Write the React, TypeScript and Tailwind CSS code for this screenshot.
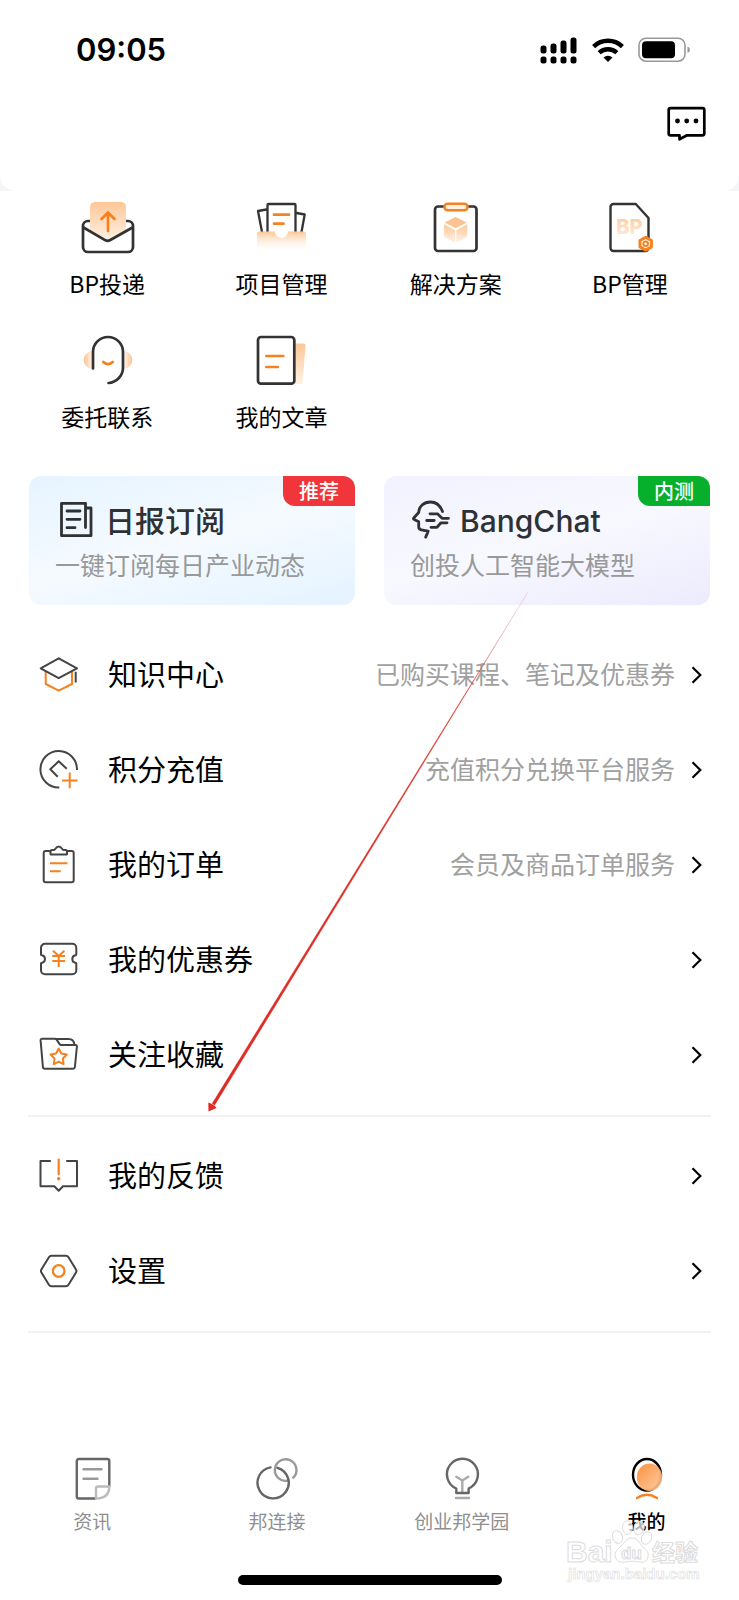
import type { ReactNode } from 'react';

interface LinkItem {
    label: string;
    href: string;
    icon: ReactNode;
    hint?: string;
}

const DARK = '#333';
const ORANGE = '#f5811f';

function ToolIcon({ children }: { children: ReactNode }) {
    return (
        <svg
            viewBox="0 0 60 60"
            className="size-15"
            fill="none"
            stroke={DARK}
            strokeWidth="2.7"
            strokeLinecap="round"
            strokeLinejoin="round"
            aria-hidden="true"
        >
            {children}
        </svg>
    );
}

function RowIcon({ children }: { children: ReactNode }) {
    return (
        <svg
            viewBox="0 0 40 40"
            className="size-10 shrink-0"
            fill="none"
            stroke="#444"
            strokeWidth="2"
            strokeLinejoin="round"
            aria-hidden="true"
        >
            {children}
        </svg>
    );
}

function TabIcon({ children }: { children: ReactNode }) {
    return (
        <svg
            viewBox="0 0 44 44"
            className="size-11"
            fill="none"
            stroke="#666"
            strokeWidth="2.4"
            strokeLinecap="round"
            strokeLinejoin="round"
            aria-hidden="true"
        >
            {children}
        </svg>
    );
}

// Shared gradients, referenced by id from the icons below
function Gradients() {
    return (
        <svg className="absolute size-0" aria-hidden="true">
            <defs>
                <linearGradient id="fadeDown" x1="0" y1="0" x2="0" y2="1">
                    <stop offset="0" stopColor="#fdc796" />
                    <stop offset="1" stopColor="#fff1e4" />
                </linearGradient>
                <linearGradient id="fadeOut" x1="0" y1="0" x2="0" y2="1">
                    <stop offset="0" stopColor="#fdc796" />
                    <stop offset="1" stopColor="#fff" stopOpacity="0" />
                </linearGradient>
                <linearGradient id="earLeft" x1="0" y1="0" x2="1" y2="0">
                    <stop offset="0" stopColor="#fcc28f" />
                    <stop offset="1" stopColor="#fff1e4" />
                </linearGradient>
                <linearGradient id="earRight" x1="1" y1="0" x2="0" y2="0">
                    <stop offset="0" stopColor="#fcc28f" />
                    <stop offset="1" stopColor="#fff1e4" />
                </linearGradient>
                <linearGradient id="face" x1="0" y1="0" x2="1" y2="1">
                    <stop offset="0" stopColor="#fb8a30" />
                    <stop offset="1" stopColor="#fcc79c" />
                </linearGradient>
                <linearGradient id="pointer" gradientUnits="userSpaceOnUse" x1="528" y1="592" x2="209" y2="1111">
                    <stop offset="0" stopColor="#d9a0b8" stopOpacity="0.6" />
                    <stop offset="0.2" stopColor="#d9342b" />
                    <stop offset="1" stopColor="#e02a22" />
                </linearGradient>
            </defs>
        </svg>
    );
}

const tools: LinkItem[] = [
    {
        label: 'BP投递',
        href: '#deliver',
        icon: (
            <ToolIcon>
                <path d="M13 21h-2a5 5 0 0 0-5 5v21a5 5 0 0 0 5 5h40a5 5 0 0 0 5-5V26a5 5 0 0 0-5-5h-2" />
                <path
                    d="M13 31V7a5 5 0 0 1 5-5h26a5 5 0 0 1 5 5v24L31 41z"
                    fill="url(#fadeDown)"
                    stroke="none"
                />
                <path d="M6.500 27.500 28.500 40.300q2.200 1.200 4.400 0L55.500 27.500" />
                <path d="M31 31V12.500M24.500 19 31 12.500 37.500 19" stroke={ORANGE} />
            </ToolIcon>
        ),
    },
    {
        label: '项目管理',
        href: '#projects',
        icon: (
            <ToolIcon>
                <path d="M15.500 9.500 7 11l4 21M45.500 13l8.200 1.500L50.500 32" strokeWidth="2.300" />
                <path d="M16.500 32V5a1 1 0 0 1 1-1h26a1 1 0 0 1 1 1v27" strokeWidth="2.300" />
                <path d="M23 14.700h15M23 23.700h9.500" stroke={ORANGE} />
                <path
                    d="M8.500 31.500H24a6.500 6.500 0 0 0 13 0h15.500a2.500 2.500 0 0 1 2.500 2.500v19H6V34a2.500 2.500 0 0 1 2.500-2.500z"
                    fill="url(#fadeOut)"
                    stroke="none"
                />
            </ToolIcon>
        ),
    },
    {
        label: '解决方案',
        href: '#solutions',
        icon: (
            <ToolIcon>
                <rect x="9" y="6.500" width="41.500" height="44.500" rx="3" />
                <rect x="18.500" y="3.800" width="23" height="6.500" rx="3" fill="#fff1e4" stroke={ORANGE} strokeWidth="2.500" />
                <g stroke="none" fill="url(#fadeDown)">
                    <path d="m29.700 17 11 5.500-11 5.700-11-5.700z" fill="#fcc28f" />
                    <path d="m18 24.200 11 5.800v12.500l-9.500-5a3 3 0 0 1-1.500-2.600z" />
                    <path d="m41.400 24.200-11 5.800v12.500l9.500-5a3 3 0 0 0 1.500-2.600z" />
                </g>
            </ToolIcon>
        ),
    },
    {
        label: 'BP管理',
        href: '#bp',
        icon: (
            <ToolIcon>
                <path d="M13.500 4h22.300l12.700 14v30a3 3 0 0 1-3 3h-32a3 3 0 0 1-3-3V7a3 3 0 0 1 3-3z" strokeWidth="2.400" />
                <text
                    x="29.500"
                    y="34"
                    textAnchor="middle"
                    fontFamily="Inter, sans-serif"
                    fontSize="20"
                    fontWeight="800"
                    fill="url(#fadeDown)"
                    stroke="none"
                >
                    BP
                </text>
                <path d="m45.700 37.300 5.700 3.200v6.400l-5.700 3.200-5.700-3.200v-6.400z" fill="#fff" stroke={ORANGE} strokeWidth="3" />
                <circle cx="45.700" cy="43.700" r="2.300" fill="#fff" stroke={ORANGE} strokeWidth="2" />
            </ToolIcon>
        ),
    },
    {
        label: '委托联系',
        href: '#contact',
        icon: (
            <ToolIcon>
                <path d="M14.500 18v18a9.100 9.100 0 0 1 0-18z" fill="url(#earLeft)" stroke="none" />
                <path d="M47.500 18v18a9.100 9.100 0 0 0 0-18z" fill="url(#earRight)" stroke="none" />
                <path d="M16 35.500V19a15 15 0 0 1 30 0v16a15.500 15.500 0 0 1-14.500 15" />
                <path d="M26.300 29q4.700 4.400 9.400 0" stroke={ORANGE} />
            </ToolIcon>
        ),
    },
    {
        label: '我的文章',
        href: '#articles',
        icon: (
            <ToolIcon>
                <path d="M44 10.500h8.500a2 2 0 0 1 2 2.200L51.500 51H44z" fill="url(#fadeDown)" stroke="none" />
                <rect x="7" y="4" width="36.300" height="46.700" rx="3" />
                <path d="M15.300 23h17M15.300 34h11.500" stroke={ORANGE} />
            </ToolIcon>
        ),
    },
];

const serviceItems: LinkItem[] = [
    {
        label: '知识中心',
        href: '#knowledge',
        hint: '已购买课程、笔记及优惠券',
        icon: (
            <RowIcon>
                <path d="M6.700 16.500V29l13 6.700L33 29V16.500" stroke={ORANGE} />
                <path d="M19.700 3.300 38 13.300l-18.300 9.900-18-9.900zM36.700 16.700v10.800" />
            </RowIcon>
        ),
    },
    {
        label: '积分充值',
        href: '#points',
        hint: '充值积分兑换平台服务',
        icon: (
            <RowIcon>
                <path d="M38 20a18.300 18.300 0 1 0-17.700 17.600" />
                <path d="m27.700 18.700-8-7.400-8.400 8 7.400 7.400" />
                <path d="M30.700 22.600v15.600M23 30.400h15.500" stroke={ORANGE} />
            </RowIcon>
        ),
    },
    {
        label: '我的订单',
        href: '#orders',
        hint: '会员及商品订单服务',
        icon: (
            <RowIcon>
                <path d="M12 6H6.700a2 2 0 0 0-2 2v27.300a2 2 0 0 0 2 2h26a2 2 0 0 0 2-2V8a2 2 0 0 0-2-2h-5.200" />
                <path d="M11.500 9V6.500q0-1.500 1.500-1.500h2c1.500 0 1.500-3.500 4.700-3.500S23 5 24.500 5h2Q28 5 28 6.500V9q0 .5-.5.500H12q-.5 0-.5-.5z" />
                <path d="M11 18.200h17.500M11 26.300h10.800" stroke={ORANGE} />
            </RowIcon>
        ),
    },
    {
        label: '我的优惠券',
        href: '#coupons',
        icon: (
            <RowIcon>
                <path d="M6 3.800h27.300a4 4 0 0 1 4 4v6.700q0 .8-.8.800a3.800 3.800 0 0 0 0 7.500q.8 0 .8.800v6.700a4 4 0 0 1-4 4H6a4 4 0 0 1-4-4v-6.700q0-.8.800-.8a3.800 3.800 0 0 0 0-7.500q-.8 0-.8-.8V7.800a4 4 0 0 1 4-4z" />
                <path d="m14 10.700 5.700 5.300 5.700-5.300M13.300 16h12.800M13.300 21h12.800M19.700 16v11" stroke={ORANGE} />
            </RowIcon>
        ),
    },
    {
        label: '关注收藏',
        href: '#favorites',
        icon: (
            <RowIcon>
                <path d="M3.300 3.700H16q1 0 1.600.9l3 4.500q.6.900 1.600.9h14.200q1.700 0 1.500 1.700l-2 20.300q-.2 1.700-1.800 1.700H5.800Q4 33.700 3.900 32L1.600 5.400q-.1-1.700 1.700-1.700z" />
                <path d="M17 3.900h12.500q5.500 0 6 6" />
                <path d="m19.700 13.500 2.600 5 5.500 1-3.900 4 .7 5.600-4.900-2.500-4.900 2.500.7-5.600-3.900-4 5.500-1z" stroke={ORANGE} />
            </RowIcon>
        ),
    },
];

const supportItems: LinkItem[] = [
    {
        label: '我的反馈',
        href: '#feedback',
        icon: (
            <RowIcon>
                <path d="M11.800 5H1.500v25.300h13.800l4.400 4.400 4.300-4.400h14V5H27.200" />
                <path d="M19.700 3.500v14.800" stroke={ORANGE} strokeWidth="2.200" strokeLinecap="round" />
                <circle cx="19.700" cy="22.700" r="1.800" fill={ORANGE} stroke="none" />
            </RowIcon>
        ),
    },
    {
        label: '设置',
        href: '#settings',
        icon: (
            <RowIcon>
                <path d="M12.500 4.700h14.400q1.700 0 2.600 1.500l7.500 12.300q.9 1.500 0 3l-7.500 12.300q-.9 1.500-2.600 1.500H12.500q-1.700 0-2.600-1.500L2.400 21.500q-.9-1.500 0-3L9.900 6.200q.9-1.500 2.600-1.500z" />
                <circle cx="19.700" cy="20" r="5.800" stroke={ORANGE} strokeWidth="2.300" />
            </RowIcon>
        ),
    },
];

const tabs: LinkItem[] = [
    {
        label: '资讯',
        href: '#news',
        icon: (
            <TabIcon>
                <path d="M25 42.500H8.800a2 2 0 0 1-2-2V5a2 2 0 0 1 2-2h28.500a2 2 0 0 1 2 2v25" />
                <path d="M39.300 30.500H28a2 2 0 0 0-2 2v10q13.300 0 13.300-12z" stroke="#bbb" />
                <path d="M13.500 13.300h18M13.500 22.700h14" stroke="#999" />
            </TabIcon>
        ),
    },
    {
        label: '邦连接',
        href: '#connect',
        icon: (
            <TabIcon>
                <path d="M38.300 21.700A10.800 10.800 0 1 0 33.500 24.500" stroke="#999" />
                <path d="M15.500 11.400a15.600 15.600 0 1 0 7 .4" />
            </TabIcon>
        ),
    },
    {
        label: '创业邦学园',
        href: '#academy',
        icon: (
            <TabIcon>
                <path d="m16.300 20.700 6 3.800 6-3.800M22.300 24.500v12.300M16 42h13" stroke="#aaa" />
                <path d="M16.300 37v-4.500A15.500 15.500 0 1 1 29 32.300q-.4.300-.4 1V37z" />
            </TabIcon>
        ),
    },
    {
        label: '我的',
        href: '#me',
        icon: (
            <TabIcon>
                <ellipse cx="22" cy="18.800" rx="14" ry="15.800" stroke="#000" />
                <ellipse cx="24.500" cy="21.300" rx="12.700" ry="13.700" fill="url(#face)" fillOpacity="0.92" stroke="none" />
                <path d="M12 42q10-6.500 20 0" stroke={ORANGE} />
            </TabIcon>
        ),
    },
];

function StatusBar() {
    return (
        <div className="flex items-center justify-between pt-7 pr-12 pl-19">
            <time className="font-['Inter',sans-serif] text-[31px] leading-11 font-semibold">09:05</time>
            <div className="flex items-center gap-3.5">
                <svg viewBox="0 0 38 28" className="h-7 w-[38px]" aria-hidden="true">
                    <rect x="0.500" y="9.500" width="6" height="8" rx="2.500" />
                    <rect x="10.500" y="7.500" width="6" height="10" rx="2.500" />
                    <rect x="20.500" y="4.500" width="6" height="13" rx="2.500" />
                    <rect x="30.500" y="1.500" width="6" height="16" rx="2.500" />
                    <rect x="0.500" y="20.500" width="6" height="7" rx="2.500" />
                    <rect x="10.500" y="20.500" width="6" height="7" rx="2.500" />
                    <rect x="20.500" y="20.500" width="6" height="7" rx="2.500" />
                    <rect x="30.500" y="20.500" width="6" height="7" rx="2.500" />
                </svg>
                <svg viewBox="0 0 32 26" className="h-[26px] w-8" fill="none" stroke="#000" strokeWidth="4.400" aria-hidden="true">
                    <path d="M1.600 9.600a20.600 20.600 0 0 1 28.800 0" />
                    <path d="M7.200 15.800a12.600 12.600 0 0 1 17.600 0" />
                    <path d="M11.500 20.500a6.500 6.500 0 0 1 9 0L16 25z" fill="#000" stroke="none" />
                </svg>
                <svg viewBox="0 0 53 26" className="h-[26px] w-[53px]" aria-hidden="true">
                    <rect x="1" y="1.200" width="46" height="23" rx="7" fill="none" stroke="#999" strokeWidth="1.600" />
                    <rect x="4" y="4.200" width="33" height="17" rx="4" />
                    <path d="M49.500 9.500q2.500.8 2.500 3.200t-2.500 3.200z" fill="#999" />
                </svg>
            </div>
        </div>
    );
}

interface PromoCardProps {
    title: string;
    subtitle: string;
    badge: string;
    href: string;
    icon: ReactNode;
    cardClass: string;
    badgeClass: string;
}

function PromoCard({ title, subtitle, badge, href, icon, cardClass, badgeClass }: PromoCardProps) {
    return (
        <a href={href} className={`relative flex flex-1 flex-col gap-2 rounded-xl pt-6 pb-[25px] pl-[26px] ${cardClass}`}>
            <span
                className={`absolute top-0 right-0 flex h-[30px] w-[72px] items-center justify-center rounded-tr-xl rounded-bl-xl text-xl font-medium text-white ${badgeClass}`}
            >
                {badge}
            </span>
            <div className="flex items-center gap-2.5 text-[#2f3133]">
                {icon}
                <h2 className="pt-0.5 font-['Inter','Noto_Sans_CJK_SC',sans-serif] text-3xl leading-[38px] font-medium">{title}</h2>
            </div>
            <p className="text-[25px] leading-8 whitespace-nowrap text-[#999]">{subtitle}</p>
        </a>
    );
}

function MenuRow({ item }: { item: LinkItem }) {
    return (
        <li>
            <a href={item.href} className="flex h-[95px] items-center pr-[37px] pl-[39px]">
                {item.icon}
                <span className="ml-[29px] pb-1 text-[29px] leading-10">{item.label}</span>
                <span className="ml-auto pb-1 text-[25px] leading-10 text-[#a0a0a0]">{item.hint}</span>
                <svg viewBox="0 0 11 18" className="ml-4 h-[18px] w-[11px]" fill="none" stroke="#000" strokeWidth="2.200" aria-hidden="true">
                    <path d="M1.500 1.300 9.300 9l-7.800 7.700" />
                </svg>
            </a>
        </li>
    );
}

function Watermark() {
    return (
        <svg
            viewBox="0 0 136 66"
            className="pointer-events-none absolute right-[39px] bottom-4 h-[66px] w-[136px]"
            fill="#fff"
            stroke="#dcdcdc"
            strokeWidth="1"
            fontFamily="'Liberation Sans', 'Noto Sans CJK SC', sans-serif"
            fontWeight="700"
        >
            <g fillOpacity="0.7">
                <ellipse cx="53.500" cy="19" rx="5" ry="6.500" transform="rotate(-20 53.500 19)" />
                <ellipse cx="63.500" cy="9.500" rx="5" ry="6.800" />
                <ellipse cx="75" cy="10" rx="5" ry="6.800" transform="rotate(12 75 10)" />
                <ellipse cx="82.500" cy="20" rx="5" ry="6.500" transform="rotate(25 82.500 20)" />
                <path d="M68 20c6 0 7 5 11 9 4 3 6 6 5 10-1 5-5 6-9 5-5-1-9-1-14 0-5 1-9-1-10-6 0-5 2-6 6-10 4-3 5-8 11-8z" />
            </g>
            <text x="2" y="44" fontSize="30">Bai</text>
            <text x="57" y="41" fontSize="17">du</text>
            <text x="88" y="43" fontSize="23">经验</text>
            <text x="4" y="61" fontSize="15" strokeWidth="0.600">jingyan.baidu.com</text>
        </svg>
    );
}

export default function App() {
    return (
        <div className="relative flex min-h-screen flex-col overflow-hidden bg-white font-['Noto_Sans_CJK_SC',sans-serif] text-black">
            <Gradients />

            {/* Header */}
            <div className="bg-[#f5f6f8]">
                <header className="h-[191px] rounded-b-2xl bg-white">
                    <StatusBar />
                    <div className="flex justify-end pt-[33px] pr-[31px]">
                        <button type="button" aria-label="消息">
                            <svg viewBox="0 0 42 36" className="h-9 w-[42px]" fill="none" stroke="#000" strokeWidth="2.700" strokeLinejoin="round" aria-hidden="true">
                                <path d="M4.500 3.200h32q1.800 0 1.800 1.800v23.500q0 1.800-1.800 1.800H21l-7.500 4v-4h-9q-1.800 0-1.800-1.800V5q0-1.800 1.800-1.800z" />
                                <g fill="#000" stroke="none">
                                    <circle cx="11.500" cy="16" r="2.400" />
                                    <circle cx="20.700" cy="16" r="2.400" />
                                    <circle cx="30" cy="16" r="2.400" />
                                </g>
                            </svg>
                        </button>
                    </div>
                </header>
            </div>

            <main>
                {/* Tools */}
                <div className="grid grid-cols-4 gap-y-[34px] pt-[9px] pr-[22px] pl-5">
                    {tools.map((tool) => (
                        <a key={tool.href} href={tool.href} className="flex flex-col items-center gap-[7px]">
                            {tool.icon}
                            <span className="text-[23px] leading-8">{tool.label}</span>
                        </a>
                    ))}
                </div>

                {/* Promo cards */}
                <div className="mt-11 flex gap-[29px] px-[29px]">
                    <PromoCard
                        title="日报订阅"
                        subtitle="一键订阅每日产业动态"
                        badge="推荐"
                        href="#daily"
                        cardClass="bg-linear-165 from-[#e6f4ff] via-[#f5faff] to-[#e4f3ff]"
                        badgeClass="bg-[#f0353b]"
                        icon={
                            <svg viewBox="-3 -2 40 40" className="size-10" fill="none" stroke="currentColor" strokeWidth="2.800" strokeLinejoin="round" strokeLinecap="round" aria-hidden="true">
                                <path d="M27.500 25.500V1.300H3.500v32.400H33V6h-5.500M9 9h13M9 17.300h13M9 25.700h8" />
                            </svg>
                        }
                    />
                    <PromoCard
                        title="BangChat"
                        subtitle="创投人工智能大模型"
                        badge="内测"
                        href="#bangchat"
                        cardClass="bg-linear-165 from-[#f2f2ff] via-[#f8f8ff] to-[#ecebfd]"
                        badgeClass="bg-[#06b02c]"
                        icon={
                            <svg viewBox="0 0 40 40" className="size-10" fill="none" stroke="currentColor" strokeWidth="2.800" strokeLinejoin="round" strokeLinecap="round" aria-hidden="true">
                                <path d="M32.500 11.500C30 5 26 2 20.500 2 13.500 2 9 6.500 8.700 12.500L3.700 18q-.7 1 .5 1.500l4.500 2.300v5q0 2.500 2.500 3l7 1.300-2.500 6" />
                                <path d="M20 13.800h7.500l4.500 4.500h6.500M16.700 20.500h7.500M21 27.300h6l4-4.500h6" />
                            </svg>
                        }
                    />
                </div>

                {/* Menu */}
                <ul className="pt-[22px]">
                    {serviceItems.map((item) => (
                        <MenuRow key={item.href} item={item} />
                    ))}
                </ul>
                <hr className="mx-7 mt-[13px] border-t-2 border-[#f2f2f2]" />
                <ul className="pt-[11px]">
                    {supportItems.map((item) => (
                        <MenuRow key={item.href} item={item} />
                    ))}
                </ul>
                <hr className="mx-7 mt-[13px] border-t-2 border-[#f2f2f2]" />
            </main>

            {/* Tab bar */}
            <footer className="mt-auto pt-10 pb-[15px]">
                <nav className="grid grid-cols-4">
                    {tabs.map((tab) => (
                        <a
                            key={tab.href}
                            href={tab.href}
                            className={`flex flex-col items-center gap-[7px] text-[19px] leading-7 ${tab.href === '#me' ? 'font-medium text-black' : 'text-[#8f8f8f]'}`}
                        >
                            {tab.icon}
                            <span>{tab.label}</span>
                        </a>
                    ))}
                </nav>
                <div className="mx-auto mt-10 h-2.5 w-[264px] rounded-full bg-black" />
            </footer>

            <Watermark />

            {/* Arrow drawn across the page */}
            <svg viewBox="0 0 739 1600" className="pointer-events-none absolute top-0 left-0 h-[1600px] w-[739px]" aria-hidden="true">
                <path d="M528 592 214.700 1105.200 212.100 1103.600z" fill="url(#pointer)" stroke="url(#pointer)" strokeWidth="0.300" />
                <path d="M208.500 1111.500 208.300 1102.500 211.800 1104 214.500 1105.700 216.500 1108z" fill="#e02a22" />
            </svg>
        </div>
    );
}
